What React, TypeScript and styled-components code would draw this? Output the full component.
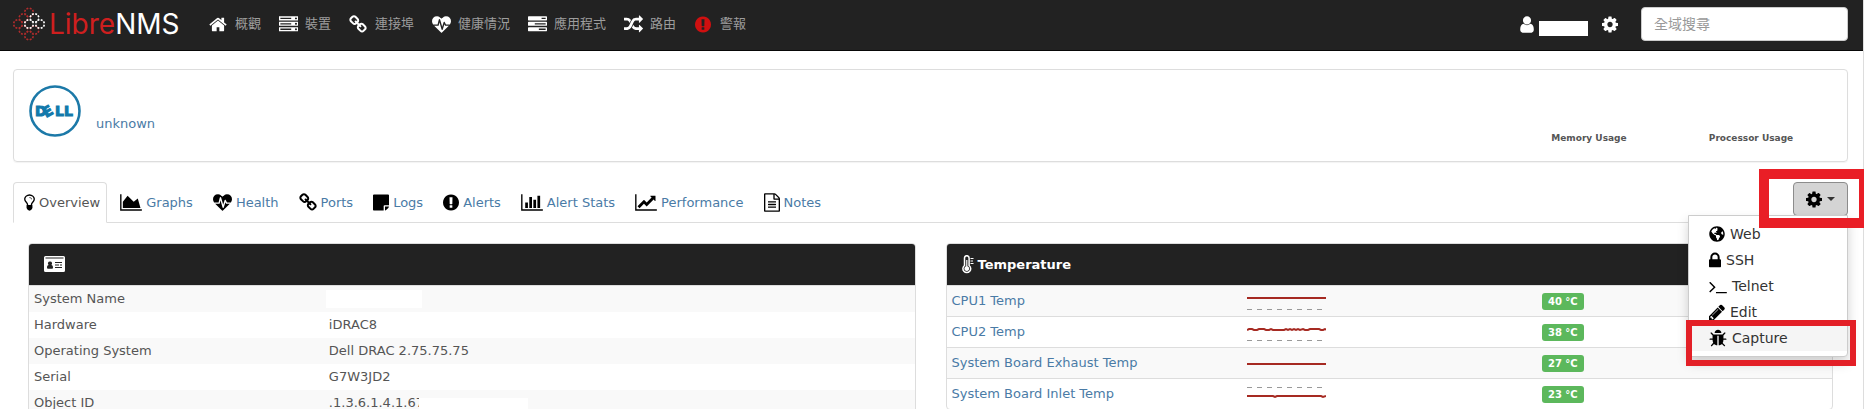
import React from "react";
import styled, { createGlobalStyle, css } from "styled-components";
import { FaGlobeAmericas } from "react-icons/fa";

const GlobalStyle = createGlobalStyle`
  *, *::before, *::after { box-sizing: border-box; }
  html, body { margin: 0; background: #fff; }
  body {
    height: 100vh;
    overflow: hidden;
    font-family: "DejaVu Sans", Verdana, "Noto Sans CJK TC", sans-serif;
    font-size: 13px;
    line-height: 20px;
    color: #555;
  }
  a { color: #4a7ba6; text-decoration: none; }
`;

/* ---------- icons ---------- */

type Glyph = { x: number; w: number; d: string };

const glyphs: Record<string, Glyph> = {
  home: { x: 64, w: 1664, d: "M1472 992v480q0 26-19 45t-45 19h-384v-384h-256v384h-384q-26 0-45-19t-19-45v-480q0-1 .5-3t.5-3l575-474 575 474q1 2 1 6zm223-69l-62 74q-8 9-21 11h-3q-13 0-21-7l-692-577-692 577q-12 8-24 7-13-2-21-11l-62-74q-8-10-7-23.5t11-21.5l719-599q32-26 76-26t76 26l244 204v-195q0-14 9-23t23-9h192q14 0 23 9t9 23v408l219 182q10 8 11 21.5t-7 23.5z" },
  server: { x: 0, w: 1792, d: "M128 1408h1024v-128h-1024v128zm0-512h1024v-128h-1024v128zm1568 448q0-40-28-68t-68-28-68 28-28 68 28 68 68 28 68-28 28-68zm-1568-960h1024v-128h-1024v128zm1568 448q0-40-28-68t-68-28-68 28-28 68 28 68 68 28 68-28 28-68zm0-512q0-40-28-68t-68-28-68 28-28 68 28 68 68 28 68-28 28-68zm96 832v384h-1792v-384h1792zm0-512v384h-1792v-384h1792zm0-512v384h-1792v-384h1792z" },
  link: { x: 64, w: 1664, d: "M1520 1216q0-40-28-68l-208-208q-28-28-68-28-42 0-72 32 3 3 19 18.5t21.5 21.5 15 19 13 25.5 3.5 27.5q0 40-28 68t-68 28q-15 0-27.5-3.5t-25.5-13-19-15-21.5-21.5-18.5-19q-33 31-33 73 0 40 28 68l206 207q27 27 68 27 40 0 68-26l147-146q28-28 28-67zm-703-705q0-40-28-68l-206-207q-28-28-68-28-39 0-68 27l-147 146q-28 28-28 67 0 40 28 68l208 208q27 27 68 27 42 0 72-31-3-3-19-18.5t-21.5-21.5-15-19-13-25.5-3.5-27.5q0-40 28-68t68-28q15 0 27.5 3.5t25.5 13 19 15 21.5 21.5 18.5 19q33-31 33-73zm895 705q0 120-85 203l-147 146q-83 83-203 83-121 0-204-85l-206-207q-83-83-83-203 0-123 88-209l-88-88q-86 88-208 88-120 0-204-84l-208-208q-84-84-84-204t85-203l147-146q83-83 203-83 121 0 204 85l206 207q83 83 83 203 0 123-88 209l88 88q86-88 208-88 120 0 204 84l208 208q84 84 84 204z" },
  heart: { x: 0, w: 1792, d: "M1280 1024h305q-5 6-10 10.5t-9 7.5l-3 4-623 600q-18 18-44 18t-44-18l-624-602q-5-2-21-20h369q22 0 39.5-13.5t22.5-34.5l70-281 190 667q6 20 23 33t39 13q21 0 38-13t23-33l146-485 56 112q18 35 57 35zm512-428q0 145-103 300h-369l-111-221q-8-17-25.5-27t-36.5-8q-45 5-56 46l-129 430-196-686q-6-20-23.5-33t-39.5-13-39 13.5-22 34.5l-116 464h-423q-103-155-103-300 0-220 127-344t351-124q62 0 126.5 21.5t120 58 95.5 68.5 76 68q36-36 76-68t95.5-68.5 120-58 126.5-21.5q224 0 351 124t127 344z" },
  tasks: { x: 0, w: 1792, d: "M1024 1408h640v-128h-640v128zm-384-512h1024v-128h-1024v128zm640-512h384v-128h-384v128zm512 832v256q0 26-19 45t-45 19h-1664q-26 0-45-19t-19-45v-256q0-26 19-45t45-19h1664q26 0 45 19t19 45zm0-512v256q0 26-19 45t-45 19h-1664q-26 0-45-19t-19-45v-256q0-26 19-45t45-19h1664q26 0 45 19t19 45zm0-512v256q0 26-19 45t-45 19h-1664q-26 0-45-19t-19-45v-256q0-26 19-45t45-19h1664q26 0 45 19t19 45z" },
  random: { x: 0, w: 1792, d: "M666 481q-60 92-137 273-22-45-37-72.5t-40.5-63.5-51-56.5-63-35-81.5-14.5h-224q-14 0-23-9t-9-23v-192q0-14 9-23t23-9h224q250 0 410 225zm1126 799q0 14-9 23l-320 320q-9 9-23 9-13 0-22.5-9.5t-9.5-22.5v-192q-32 0-85 .5t-81 1-73-1-71-5-64-10.5-63-18.5-58-28.5-59-40-55-53.5-56-69.5q59-93 136-273 22 45 37 72.5t40.5 63.5 51 56.5 63 35 81.5 14.5h256v-192q0-14 9-23t23-9q12 0 24 10l319 319q9 9 9 23zm0-896q0 14-9 23l-320 320q-9 9-23 9-13 0-22.5-9.5t-9.5-22.5v-192h-256q-48 0-87 15t-69 45-51 61.5-45 77.5q-32 62-78 171-29 66-49.5 111t-54 105-64 100-74 83-90 68.5-106.5 42-128 16.5h-224q-14 0-23-9t-9-23v-192q0-14 9-23t23-9h224q48 0 87-15t69-45 51-61.5 45-77.5q32-62 78-171 29-66 49.5-111t54-105 64-100 74-83 90-68.5 106.5-42 128-16.5h256v-192q0-14 9-23t23-9q12 0 24 10l319 319q9 9 9 23z" },
  alert: { x: 128, w: 1536, d: "M896 128q209 0 385.5 103t279.5 279.5 103 385.5-103 385.5-279.5 279.5-385.5 103-385.5-103-279.5-279.5-103-385.5 103-385.5 279.5-279.5 385.5-103zm128 1247v-190q0-14-9-23.5t-22-9.5h-192q-13 0-23 10t-10 23v190q0 13 10 23t23 10h192q13 0 22-9.5t9-23.5zm-2-344l18-621q0-12-10-18-10-8-24-8h-220q-14 0-24 8-10 6-10 18l17 621q0 10 10 17.5t24 7.5h185q14 0 23.5-7.5t10.5-17.5z" },
  user: { x: 256, w: 1280, d: "M1536 1399q0 109-62.5 187t-150.5 78h-854q-88 0-150.5-78t-62.5-187q0-85 8.5-160.5t31.5-152 58.5-131 94-89 134.5-34.5q131 128 313 128t313-128q76 0 134.5 34.5t94 89 58.5 131 31.5 152 8.5 160.5zm-256-887q0 159-112.5 271.5t-271.5 112.5-271.5-112.5-112.5-271.5 112.5-271.5 271.5-112.5 271.5 112.5 112.5 271.5z" },
  cog: { x: 128, w: 1536, d: "M1152 896q0-106-75-181t-181-75-181 75-75 181 75 181 181 75 181-75 75-181zm512-109v222q0 12-8 23t-20 13l-185 28q-19 54-39 91 35 50 107 138 10 12 10 25t-9 23q-27 37-99 108t-94 71q-12 0-26-9l-138-108q-44 23-91 38-16 136-29 186-7 28-36 28h-222q-14 0-24.5-8.5t-11.5-21.5l-28-184q-49-16-90-37l-141 107q-10 9-25 9-14 0-25-11-126-114-165-168-7-10-7-23 0-12 8-23 15-21 51-66.5t54-70.5q-27-50-41-99l-183-27q-13-2-21-12.5t-8-23.5v-222q0-12 8-23t19-13l186-28q14-46 39-92-40-57-107-138-10-12-10-24 0-10 9-23 26-36 98.5-107.5t94.5-71.5q13 0 26 10l138 107q44-23 91-38 16-136 29-186 7-28 36-28h222q14 0 24.5 8.5t11.5 21.5l28 184q49 16 90 37l142-107q9-9 24-9 13 0 25 10 129 119 165 170 7 8 7 22 0 12-8 23-15 21-51 66.5t-54 70.5q26 50 41 98l183 28q13 2 21 12.5t8 23.5z" },
  bulb: { x: 384, w: 1024, d: "M1120 576q0 13-9.5 22.5t-22.5 9.5-22.5-9.5-9.5-22.5q0-46-54-71t-106-25q-13 0-22.5-9.5t-9.5-22.5 9.5-22.5 22.5-9.5q50 0 99.5 16t87 54 37.5 90zm160 0q0-72-34.5-134t-90-101.5-123-62-136.5-22.5-136.5 22.5-123 62-90 101.5-34.5 134q0 101 68 180 10 11 30.5 33t30.5 33q128 153 141 298h228q13-145 141-298 10-11 30.5-33t30.5-33q68-79 68-180zm128 0q0 155-103 268-45 49-74.5 87t-59.5 95.5-34 107.5q47 28 47 82 0 37-25 64 25 27 25 64 0 52-45 81 13 23 13 47 0 46-31.5 71t-77.5 25q-20 44-60 70t-87 26-87-26-60-70q-46 0-77.5-25t-31.5-71q0-24 13-47-45-29-45-81 0-37 25-64-25-27-25-64 0-54 47-82-4-50-34-107.5t-59.5-95.5-74.5-87q-103-113-103-268 0-99 44.5-184.5t117-142 164-89 186.5-32.5 186.5 32.5 164 89 117 142 44.5 184.5z" },
  area: { x: 0, w: 2048, d: "M2048 1536v128h-2048v-1536h128v1408h1920zm-384-1024l256 896h-1664v-576l448-576 576 576z" },
  bars: { x: 0, w: 2048, d: "M640 896v512h-256v-512h256zm384-512v1024h-256v-1024h256zm1024 1152v128h-2048v-1536h128v1408h1920zm-640-896v768h-256v-768h256zm384-384v1152h-256v-1152h256z" },
  line: { x: 0, w: 2048, d: "M2048 1536v128h-2048v-1536h128v1408h1920zm-128-1248v435q0 21-19.5 29.5t-35.5-7.5l-121-121-633 633q-10 10-23 10t-23-10l-233-233-416 416-192-192 585-585q10-10 23-10t23 10l233 233 464-464-121-121q-16-16-7.5-35.5t29.5-19.5h435q14 0 23 9t9 23z" },
  sticky: { x: 128, w: 1536, d: "M1152 1248v416h-928q-40 0-68-28t-28-68v-1344q0-40 28-68t68-28h1344q40 0 68 28t28 68v928h-416q-40 0-68 28t-28 68zm128 32h381q-15 82-65 132l-184 184q-50 50-132 65z" },
  file: { x: 128, w: 1536, d: "M1596 380q28 28 48 76t20 88v1152q0 40-28 68t-68 28h-1344q-40 0-68-28t-28-68v-1600q0-40 28-68t68-28h896q40 0 88 20t76 48zm-444-244v376h376q-10-29-22-41l-313-313q-12-12-41-22zm384 1528v-1024h-416q-40 0-68-28t-28-68v-416h-768v1536h1280zm-1024-864q0-14 9-23t23-9h704q14 0 23 9t9 23v64q0 14-9 23t-23 9h-704q-14 0-23-9t-9-23v-64zm736 224q14 0 23 9t9 23v64q0 14-9 23t-23 9h-704q-14 0-23-9t-9-23v-64q0-14 9-23t23-9h704zm0 256q14 0 23 9t9 23v64q0 14-9 23t-23 9h-704q-14 0-23-9t-9-23v-64q0-14 9-23t23-9h704z" },
  lock: { x: 320, w: 1152, d: "M640 768h512v-192q0-106-75-181t-181-75-181 75-75 181v192zm832 96v576q0 40-28 68t-68 28h-960q-40 0-68-28t-28-68v-576q0-40 28-68t68-28h32v-192q0-184 132-316t316-132 316 132 132 316v192h32q40 0 68 28t28 68z" },
  terminal: { x: 64, w: 1664, d: "M649 983l-466 466q-10 10-23 10t-23-10l-50-50q-10-10-10-23t10-23l393-393-393-393q-10-10-10-23t10-23l50-50q10-10 23-10t23 10l466 466q10 10 10 23t-10 23zm1079 457v64q0 14-9 23t-23 9h-960q-14 0-23-9t-9-23v-64q0-14 9-23t23-9h960q14 0 23 9t9 23z" },
  pencil: { x: 128, w: 1536, d: "M491 1536l91-91-235-235-91 91v107h128v128h107zm523-928q0-22-22-22-10 0-17 7l-542 542q-7 7-7 17 0 22 22 22 10 0 17-7l542-542q7-7 7-17zm-54-192l416 416-832 832h-416v-416zm683 96q0 53-37 90l-166 166-416-416 166-165q36-38 90-38 53 0 91 38l235 234q37 39 37 91z" },
  bug: { x: 64, w: 1664, d: "M1696 960q0 26-19 45t-45 19h-224q0 171-67 290l208 209q19 19 19 45t-19 45q-18 19-45 19t-45-19l-198-197q-5 5-15 13t-42 28.5-65 36.5-82 29-97 13v-896h-128v896q-51 0-101.5-13.5t-87-33-66-39-43.5-32.5l-15-14-183 207q-20 21-48 21-24 0-43-16-19-18-20.5-44.5t15.5-46.5l202-227q-58-114-58-274h-224q-26 0-45-19t-19-45 19-45 45-19h224v-294l-173-173q-19-19-19-45t19-45 45-19 45 19l173 173h844l173-173q19-19 45-19t45 19 19 45-19 45l-173 173v294h224q26 0 45 19t19 45zm-480-576h-640q0-133 93.5-226.5t226.5-93.5 226.5 93.5 93.5 226.5z" },
};

const Svg = styled.svg`
  display: block;
  flex: none;
  fill: currentColor;
`;

function Icon({ name, size = 19 }: { name: string; size?: number }) {
  const g = glyphs[name];
  return (
    <Svg
      width={Math.round((g.w * size) / 1792)}
      height={size}
      viewBox={`${g.x} 0 ${g.w} 1792`}
      aria-hidden="true"
    >
      <path d={g.d} />
    </Svg>
  );
}

function CardIcon() {
  return (
    <Svg width="21" height="17" viewBox="0 0 21 17" aria-hidden="true">
      <path
        fillRule="evenodd"
        d="M1.5 0h18A1.5 1.5 0 0 1 21 1.5v13a1.5 1.5 0 0 1-1.5 1.5h-18A1.5 1.5 0 0 1 0 14.5v-13A1.5 1.5 0 0 1 1.5 0zM1.5 1.5v1h18v-1zM6 5.5a2 2 0 0 0-1.3 3.600C3.600 9.300 3 10.300 3 11.500c0 .8.5 1.300 1.200 1.300h3.600c.7 0 1.200-.5 1.200-1.300 0-1.200-.6-2.200-1.700-2.400A2 2 0 0 0 6 5.500zM11 6v1h7V6zM11 8.500v1h4v-1zM16 8.500v1h2v-1zM11 11v1h7v-1z"
      />
    </Svg>
  );
}

function ThermometerIcon() {
  return (
    <Svg width="12" height="19" viewBox="0 0 12 19" aria-hidden="true">
      <path
        d="M2.500 10.500V3a2.300 2.300 0 0 1 4.600 0v7.500a3.900 3.900 0 1 1-4.600 0z"
        fill="none"
        stroke="currentColor"
        strokeWidth="1.500"
      />
      <path d="M4.200 5h1.200v6.200a2.400 2.400 0 1 1-1.200 0zM8.500 3h3v1h-3zM8.500 5.500h2.500v1H8.500zM8.500 8h3v1h-3z" />
    </Svg>
  );
}

/* ---------- navigation bar ---------- */

const Page = styled.div`
  min-height: 100vh;
  border-right: 1px solid #ddd;
`;

const NavBar = styled.nav`
  display: flex;
  align-items: center;
  height: 51px;
  padding: 0 15px 2px 13px;
  background: #222;
  border-bottom: 1px solid #080808;
`;

const Brand = styled.a`
  display: flex;
  align-items: center;
  width: 193px;
  color: #fff;
`;

const BrandText = styled.text`
  font-family: Inter, sans-serif;
  font-size: 28px;
  font-weight: 400;
  fill: #fff;
`;

const BrandAccent = styled.tspan`
  fill: #cf1f1f;
`;

const NavList = styled.ul`
  display: flex;
  gap: 15px;
  margin: 0;
  padding: 0;
  list-style: none;
`;

const NavLink = styled.a`
  display: flex;
  align-items: center;
  gap: 5px;
  height: 48px;
  color: #9d9d9d;
`;

const NavIcon = styled.span<{ $alert?: boolean }>`
  display: flex;
  justify-content: center;
  width: 24px;
  color: ${(p) => (p.$alert ? "#cf1010" : "#fff")};
`;

const NavTools = styled.div`
  display: flex;
  align-items: center;
  gap: 14px;
  margin-left: auto;
  color: #fff;
`;

const UserLink = styled.a`
  display: flex;
  align-items: center;
  gap: 5px;
  color: #fff;
`;

const UserName = styled.span`
  width: 49px;
  height: 15px;
  margin-top: 8px;
  background: #fff;
`;

const IconButton = styled.button`
  padding: 0;
  border: 0;
  background: none;
  color: #fff;
`;

const Search = styled.input`
  width: 207px;
  height: 34px;
  margin-left: 9px;
  padding: 6px 12px;
  border: 1px solid #ccc;
  border-radius: 4px;
  background: #fff;
  color: #555;
  font: inherit;
  font-size: 14px;
  &::placeholder {
    color: #999;
    opacity: 1;
  }
`;

function ring(cx: number, cy: number) {
  const r = 4.4;
  return [0, 1, 2, 3, 4, 5, 6, 7]
    .map((i) => {
      const a = (i * Math.PI) / 4 + 0.16;
      const b = a + Math.PI / 4 - 0.32;
      return `M${cx + r * Math.cos(a)} ${cy + r * Math.sin(a)}L${cx + r * Math.cos(b)} ${cy + r * Math.sin(b)}`;
    })
    .join("");
}

function BrandLogo() {
  return (
    <svg width="176" height="36" viewBox="0 0 176 36" role="img" aria-label="LibreNMS">
      <g fill="none" strokeWidth="1.600">
        <path
          stroke="#b02c2c"
          d={ring(16, 6.5) + ring(10.5, 12) + ring(5, 18) + ring(10.5, 24) + ring(16, 29.5) + ring(21.5, 24)}
        />
        <path stroke="#fff" d={ring(21.5, 12) + ring(16, 18) + ring(27, 18)} />
      </g>
      <BrandText x="36" y="28">
        <BrandAccent>Libre</BrandAccent>NMS
      </BrandText>
    </svg>
  );
}

const navItems = [
  { icon: "home", label: "概觀" },
  { icon: "server", label: "裝置" },
  { icon: "link", label: "連接埠" },
  { icon: "heart", label: "健康情況" },
  { icon: "tasks", label: "應用程式" },
  { icon: "random", label: "路由" },
  { icon: "alert", label: "警報", alert: true },
];

/* ---------- device header ---------- */

const Content = styled.main`
  padding: 18px 15px 0 13px;
`;

const DeviceHeader = styled.header`
  display: flex;
  height: 93px;
  padding: 15px;
  border: 1px solid #ddd;
  border-radius: 4px;
  box-shadow: 0 1px 1px rgba(0, 0, 0, 0.05);
`;

const DeviceLink = styled.a`
  align-self: flex-end;
  margin: 0 auto 12px 15px;
`;

const DellWord = styled.text`
  font-family: "DejaVu Sans", sans-serif;
  font-size: 14px;
  font-weight: bold;
  fill: #1379ab;
  stroke: #1379ab;
  stroke-width: 1px;
`;

const Usage = styled.div`
  align-self: flex-end;
  width: 162px;
  font-size: 9px;
  font-weight: bold;
  line-height: 16px;
  text-align: center;
`;

/* ---------- tabs and actions ---------- */

const TabBar = styled.div`
  display: flex;
  justify-content: space-between;
  height: 41px;
  margin-top: 20px;
  border-bottom: 1px solid #ddd;
`;

const TabList = styled.ul`
  display: flex;
  gap: 2px;
  height: 41px;
  margin: 0;
  padding: 0;
  list-style: none;
`;

const Tab = styled.a<{ $active?: boolean }>`
  display: flex;
  align-items: center;
  gap: 4px;
  height: 41px;
  padding: 0 6px 0 10px;
  border: 1px solid transparent;
  border-radius: 4px 4px 0 0;
  svg { color: #000; }
  ${(p) =>
    p.$active &&
    css`
      color: #555;
      background: #fff;
      border-color: #ddd #ddd #fff;
    `}
`;

const Actions = styled.div`
  position: relative;
`;

const ActionButton = styled.button`
  display: flex;
  align-items: center;
  gap: 5px;
  width: 55px;
  height: 34px;
  padding: 0 12px;
  border: 1px solid #8c8c8c;
  border-radius: 4px;
  background: #d4d4d4;
  color: #000;
`;

const Caret = styled.span`
  border: 4px solid transparent;
  border-top-color: #333;
  border-bottom: 0;
`;

const Menu = styled.ul`
  position: absolute;
  top: 33px;
  right: 0;
  z-index: 1;
  width: 160px;
  margin: 0;
  padding: 5px 0;
  list-style: none;
  background: #fff;
  border: 1px solid #ccc;
  border-radius: 0 0 4px 4px;
  box-shadow: 0 6px 12px rgba(0, 0, 0, 0.175);
`;

const MenuItem = styled.li`
  position: relative;
`;

const MenuLink = styled.a<{ $hover?: boolean }>`
  display: flex;
  align-items: center;
  gap: 5px;
  height: 26px;
  padding: 0 20px;
  color: #333;
  font-size: 14px;
  background: ${(p) => (p.$hover ? "#f5f5f5" : "transparent")};
  svg { color: #000; }
`;

const Highlight = styled.span<{ $target: "button" | "item" }>`
  position: absolute;
  z-index: 2;
  pointer-events: none;
  ${(p) =>
    p.$target === "button"
      ? css`
          inset: -13px -21px auto -34px;
          height: 59px;
          border: 10px solid #e91e26;
        `
      : css`
          inset: -5px -9px -15px -3px;
          border: 6px solid #e32027;
        `}
`;

const tabs = [
  { icon: "bulb", label: "Overview", active: true },
  { icon: "area", label: "Graphs" },
  { icon: "heart", label: "Health" },
  { icon: "link", label: "Ports" },
  { icon: "sticky", label: "Logs" },
  { icon: "alert", label: "Alerts" },
  { icon: "bars", label: "Alert Stats" },
  { icon: "line", label: "Performance" },
  { icon: "file", label: "Notes" },
];

const menuItems = [
  { icon: "globe", label: "Web" },
  { icon: "lock", label: "SSH" },
  { icon: "terminal", label: "Telnet" },
  { icon: "pencil", label: "Edit" },
  { icon: "bug", label: "Capture", hover: true },
];

/* ---------- panels ---------- */

const Columns = styled.div`
  display: grid;
  grid-template-columns: 1fr 1fr;
  align-items: start;
  gap: 30px;
  padding: 20px 15px 0;
`;

const Panel = styled.section`
  border: 1px solid #ddd;
  border-radius: 4px;
  overflow: hidden;
`;

const PanelHeading = styled.h2`
  display: flex;
  align-items: center;
  gap: 4px;
  height: 42px;
  margin: 0;
  padding: 0 15px;
  background: #222;
  border-bottom: 1px solid #ddd;
  color: #fff;
  font-size: 13px;
`;

const Table = styled.table<{ $lined?: boolean }>`
  width: 100%;
  table-layout: fixed;
  border-collapse: separate;
  border-spacing: 0;
  tr:nth-child(odd) { background: #f9f9f9; }
  th, td {
    height: ${(p) => (p.$lined ? 30 : 26)}px;
    padding: 0 5px;
    font-weight: normal;
    text-align: left;
  }
  ${(p) =>
    p.$lined &&
    css`
      tr + tr > * {
        height: 31px;
        border-top: 1px solid #ddd;
      }
    `}
`;

const Redacted = styled.span`
  display: block;
  width: 96px;
  height: 18px;
  margin-left: -3px;
  background: #fff;
`;

const Covered = styled.span`
  position: relative;
`;

const CoverStrip = styled.span`
  position: absolute;
  top: 3px;
  left: 90px;
  width: 109px;
  height: 18px;
  background: #fff;
`;

const Badge = styled.span`
  display: block;
  width: 42px;
  border-radius: 3px;
  background: #5cb85c;
  color: #fff;
  font-size: 10px;
  font-weight: bold;
  line-height: 17px;
  text-align: center;
`;

const Spark = styled.svg`
  display: block;
`;

const facts: { name: string; value: React.ReactNode }[] = [
  { name: "System Name", value: <Redacted /> },
  { name: "Hardware", value: "iDRAC8" },
  { name: "Operating System", value: "Dell DRAC 2.75.75.75" },
  { name: "Serial", value: "G7W3JD2" },
  {
    name: "Object ID",
    value: (
      <Covered>
        .1.3.6.1.4.1.674.10892.5
        <CoverStrip />
      </Covered>
    ),
  },
];

const sensors = [
  { name: "CPU1 Temp", value: "40 °C", line: "M0 9H79", limit: 21 },
  {
    name: "CPU2 Temp",
    value: "38 °C",
    line: "M0 10l2-1h3l2 1h3l2-1h5l2 1h3l2-1 2 1h11l2-1 2 1 2-1 2 1 2-1 2 1 2-1 2 1 3-1 2 1h3l2-1h9l2 1h2l2-1 2 1",
    limit: 21,
  },
  { name: "System Board Exhaust Temp", value: "27 °C", line: "M0 13H79" },
  { name: "System Board Inlet Temp", value: "23 °C", line: "M0 14H26l2 1 2-1H74l2 1 3-1", limit: 6 },
];

export default function App() {
  return (
    <Page>
      <GlobalStyle />
      <NavBar>
        <Brand href="#home">
          <BrandLogo />
        </Brand>
        <NavList>
          {navItems.map((n) => (
            <li key={n.label}>
              <NavLink href="#nav">
                <NavIcon $alert={n.alert}>
                  <Icon name={n.icon} />
                </NavIcon>
                {n.label}
              </NavLink>
            </li>
          ))}
        </NavList>
        <NavTools>
          <UserLink href="#user" aria-label="User">
            <Icon name="user" />
            <UserName />
          </UserLink>
          <IconButton type="button" aria-label="Settings">
            <Icon name="cog" />
          </IconButton>
          <Search type="search" placeholder="全域搜尋" aria-label="全域搜尋" />
        </NavTools>
      </NavBar>

      <Content>
        <DeviceHeader>
          <svg width="52" height="52" viewBox="1 1 52 52" role="img" aria-label="Dell">
            <circle cx="27" cy="27" r="24.5" fill="none" stroke="#1c79a8" strokeWidth="2.600" />
            <DellWord x="7 18 27 36" y="32 34 32 32" rotate="0 -30 0 0">DELL</DellWord>
          </svg>
          <DeviceLink href="#location">unknown</DeviceLink>
          <Usage>Memory Usage</Usage>
          <Usage>Processor Usage</Usage>
        </DeviceHeader>

        <TabBar>
          <TabList>
            {tabs.map((t) => (
              <li key={t.label}>
                <Tab href="#tab" $active={t.active}>
                  <Icon name={t.icon} />
                  {t.label}
                </Tab>
              </li>
            ))}
          </TabList>
          <Actions>
            <ActionButton type="button" aria-label="Device actions">
              <Icon name="cog" />
              <Caret />
            </ActionButton>
            <Menu>
              {menuItems.map((m) => (
                <MenuItem key={m.label}>
                  <MenuLink href="#action" $hover={m.hover}>
                    {m.icon === "globe" ? <FaGlobeAmericas size={16} /> : <Icon name={m.icon} />}
                    {m.label}
                  </MenuLink>
                  {m.hover && <Highlight $target="item" />}
                </MenuItem>
              ))}
            </Menu>
            <Highlight $target="button" />
          </Actions>
        </TabBar>

        <Columns>
          <Panel>
            <PanelHeading>
              <CardIcon />
            </PanelHeading>
            <Table>
              <colgroup>
                <col width="33.3%" />
                <col />
              </colgroup>
              <tbody>
                {facts.map((f) => (
                  <tr key={f.name}>
                    <th scope="row">{f.name}</th>
                    <td>{f.value}</td>
                  </tr>
                ))}
              </tbody>
            </Table>
          </Panel>
          <Panel>
            <PanelHeading>
              <ThermometerIcon />
              Temperature
            </PanelHeading>
            <Table $lined>
              <tbody>
                {sensors.map((s) => (
                  <tr key={s.name}>
                    <td>
                      <a href="#sensor">{s.name}</a>
                    </td>
                    <td>
                      <Spark width="79" height="24" viewBox="0 0 79 24" aria-hidden="true">
                        <path d={s.line} fill="none" stroke="#a62a22" strokeWidth="2" />
                        {s.limit && (
                          <path d={`M0 ${s.limit - 0.5}H76`} stroke="#999" strokeDasharray="5 5" />
                        )}
                      </Spark>
                    </td>
                    <td>
                      <Badge>{s.value}</Badge>
                    </td>
                  </tr>
                ))}
              </tbody>
            </Table>
          </Panel>
        </Columns>
      </Content>
    </Page>
  );
}
